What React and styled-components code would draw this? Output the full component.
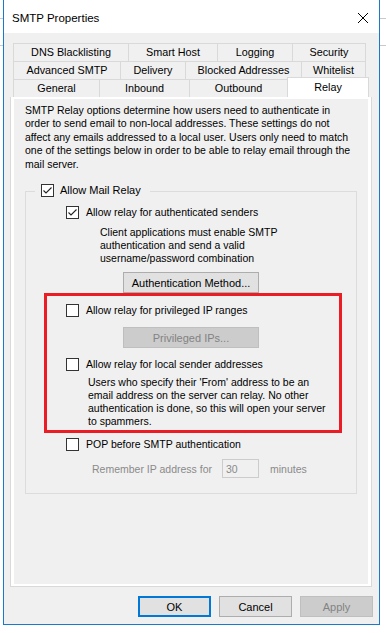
import React from "react";
import styled, { createGlobalStyle, css } from "styled-components";

const GlobalStyle = createGlobalStyle`
  html, body { margin: 0; padding: 0; background: #ffffff; }
  body { font-family: "Liberation Sans", Arial, sans-serif; font-size: 10.5px; color: #000; }
  * { box-sizing: border-box; }
`;

const Page = styled.div`
  position: relative;
  width: 386px;
  height: 633px;
  overflow: hidden;
  background:
    linear-gradient(#c9c9c9, #c9c9c9) 0 18px / 100% 1px no-repeat,
    linear-gradient(#c9c9c9, #c9c9c9) 0 45px / 100% 1px no-repeat,
    #ffffff;
`;

const Window = styled.div`
  margin-left: 3px;
  width: 377px;
  height: 625px;
  border: 1px solid #1979ca;
  border-top: none;
  display: flex;
  flex-direction: column;
  background: #f0f0f0;
`;

const TitleBar = styled.div`
  height: 33px;
  flex: none;
  background: #ffffff;
  display: flex;
  align-items: flex-start;
  justify-content: space-between;
  padding: 11px 8px 0 8px;
`;

const Title = styled.div`
  font-size: 11.5px;
  line-height: 15px;
  color: #000;
`;

const CloseBtn = styled.div`
  width: 12px;
  height: 12px;
  margin-top: 1px;
  margin-right: 2px;
  display: flex;
`;

const Body = styled.div`
  flex: 1;
  display: flex;
  flex-direction: column;
`;

const TabStrip = styled.div`
  margin: 10px 0 0 9px;
  display: flex;
  flex-direction: column;
`;

const TabRow = styled.div`
  display: flex;
  height: 18px;
  align-items: flex-end;
`;

const Tab = styled.div`
  flex: none;
  height: 18px;
  margin-right: -1px;
  border: 1px solid #d9d9d9;
  border-bottom: none;
  background: #f0f0f0;
  display: flex;
  align-items: center;
  justify-content: center;
  font-size: 10.8px;
  line-height: 13px;
  white-space: nowrap;
  ${(p) =>
    p.$selected &&
    css`
      height: 20px;
      background: #ffffff;
      position: relative;
      z-index: 2;
      padding-bottom: 1px;
    `}
`;

const Panel = styled.div`
  margin-left: 6px;
  width: 362px;
  height: 490px;
  flex: none;
  border: 1px solid #d9d9d9;
  border-top: none;
  background: #ffffff;
  padding: 2px 3px 2px 3px;
  display: flex;
`;

const PageArea = styled.div`
  position: relative;
  flex: 1;
  background: #f0f0f0;
  padding: 5px 0 0 11px;
  display: flex;
  flex-direction: column;
`;

const Para = styled.p`
  margin: ${(p) => p.$mt || 0}px 0 0 ${(p) => p.$ml || 0}px;
  line-height: ${(p) => p.$lh || 13}px;
  color: ${(p) => (p.$disabled ? "#8a8a8a" : "#000")};
  white-space: nowrap;
`;

const GroupBox = styled.div`
  margin-top: 20px;
  width: 332px;
  height: 303px;
  border: 1px solid #dcdcdc;
  display: flex;
  flex-direction: column;
  align-items: flex-start;
`;

const Legend = styled.div`
  margin: -8px 0 0 9px;
  padding: 0 9px 0 6px;
  background: #f0f0f0;
  display: flex;
  align-items: center;
  gap: 6px;
  height: 13px;
  line-height: 13px;
  font-size: 11px;
`;

const Row = styled.div`
  margin: ${(p) => p.$mt || 0}px 0 0 ${(p) => p.$ml || 40}px;
  display: flex;
  align-items: center;
  gap: 7px;
  height: 13px;
  line-height: 13px;
  white-space: nowrap;
`;

const Box = styled.span`
  flex: none;
  width: 13px;
  height: 13px;
  border: 1px solid #333333;
  background: #ffffff;
  display: flex;
  align-items: center;
  justify-content: center;
`;

const Button = styled.div`
  flex: none;
  width: ${(p) => p.$w || 73}px;
  height: 21px;
  margin: ${(p) => p.$mt || 0}px 0 0 ${(p) => p.$ml || 0}px;
  background: ${(p) => (p.$disabled ? "#cccccc" : "#e1e1e1")};
  border: 1px solid ${(p) => (p.$disabled ? "#bfbfbf" : "#adadad")};
  color: ${(p) => (p.$disabled ? "#838383" : "#000")};
  display: flex;
  align-items: center;
  justify-content: center;
  font-size: 11px;
  white-space: nowrap;
  ${(p) =>
    p.$default &&
    css`
      border: 2px solid #0078d7;
    `}
`;

const RememberRow = styled.div`
  margin: 8px 0 0 66px;
  display: flex;
  align-items: center;
  height: 19px;
  color: #8a8a8a;
  white-space: nowrap;
`;

const RememberLabel = styled.span`
  width: 130px;
`;

const NumInput = styled.div`
  width: 37px;
  height: 19px;
  border: 1px solid #cccccc;
  background: #f0f0f0;
  color: #8a8a8a;
  padding-left: 3px;
  display: flex;
  align-items: center;
  margin-right: 11px;
`;

const Highlight = styled.div`
  position: absolute;
  left: 30px;
  top: 194px;
  width: 298px;
  height: 140px;
  border: 3px solid #ec1c24;
  pointer-events: none;
`;

const Footer = styled.div`
  margin-top: 9px;
  display: flex;
  justify-content: flex-end;
  gap: 8px;
  padding-right: 6px;
`;

const Check = ({ checked }) => (
  <Box>
    {checked && (
      <svg width="11" height="11" viewBox="0 0 11 11">
        <path d="M1.5 5.5 L4 8 L9.5 2.5" fill="none" stroke="#222" strokeWidth="1.1" />
      </svg>
    )}
  </Box>
);

const tabRows = [
  [
    ["DNS Blacklisting", 116],
    ["Smart Host", 90],
    ["Logging", 76],
    ["Security", 74],
  ],
  [
    ["Advanced SMTP", 108],
    ["Delivery", 66],
    ["Blocked Addresses", 117],
    ["Whitelist", 65],
  ],
  [
    ["General", 87],
    ["Inbound", 91],
    ["Outbound", 99],
    ["Relay", 82, true],
  ],
];

export default function App() {
  return (
    <>
      <GlobalStyle />
      <Page>
        <Window>
          <TitleBar>
            <Title>SMTP Properties</Title>
            <CloseBtn>
              <svg width="12" height="12" viewBox="0 0 12 12">
                <path d="M1 1 L11 11 M11 1 L1 11" stroke="#000" strokeWidth="1" fill="none" />
              </svg>
            </CloseBtn>
          </TitleBar>
          <Body>
            <TabStrip>
              {tabRows.map((row, i) => (
                <TabRow key={i}>
                  {row.map(([label, w, sel]) => (
                    <Tab key={label} $selected={sel} style={{ width: w }}>
                      {label}
                    </Tab>
                  ))}
                </TabRow>
              ))}
            </TabStrip>
            <Panel>
              <PageArea>
                <Para $lh={13.4}>
                  SMTP Relay options determine how users need to authenticate in
                  <br />
                  order to send email to non-local addresses. These settings do not
                  <br />
                  affect any emails addressed to a local user. Users only need to match
                  <br />
                  one of the settings below in order to be able to relay email through the
                  <br />
                  mail server.
                </Para>
                <GroupBox>
                  <Legend>
                    <Check checked />
                    <span>Allow Mail Relay</span>
                  </Legend>
                  <Row $mt={9}>
                    <Check checked />
                    <span>Allow relay for authenticated senders</span>
                  </Row>
                  <Para $mt={7} $ml={74}>
                    Client applications must enable SMTP
                    <br />
                    authentication and send a valid
                    <br />
                    username/password combination
                  </Para>
                  <Button $w={136} $mt={7} $ml={97}>
                    Authentication Method...
                  </Button>
                  <Row $mt={11}>
                    <Check />
                    <span>Allow relay for privileged IP ranges</span>
                  </Row>
                  <Button $w={136} $mt={10} $ml={97} $disabled>
                    Privileged IPs...
                  </Button>
                  <Row $mt={10}>
                    <Check />
                    <span>Allow relay for local sender addresses</span>
                  </Row>
                  <Para $mt={5} $ml={62}>
                    Users who specify their 'From' address to be an
                    <br />
                    email address on the server can relay. No other
                    <br />
                    authentication is done, so this will open your server
                    <br />
                    to spammers.
                  </Para>
                  <Row $mt={10}>
                    <Check />
                    <span>POP before SMTP authentication</span>
                  </Row>
                  <RememberRow>
                    <RememberLabel>Remember IP address for</RememberLabel>
                    <NumInput>30</NumInput>
                    <span>minutes</span>
                  </RememberRow>
                </GroupBox>
                <Highlight />
              </PageArea>
            </Panel>
            <Footer>
              <Button $default>OK</Button>
              <Button>Cancel</Button>
              <Button $disabled>Apply</Button>
            </Footer>
          </Body>
        </Window>
      </Page>
    </>
  );
}
